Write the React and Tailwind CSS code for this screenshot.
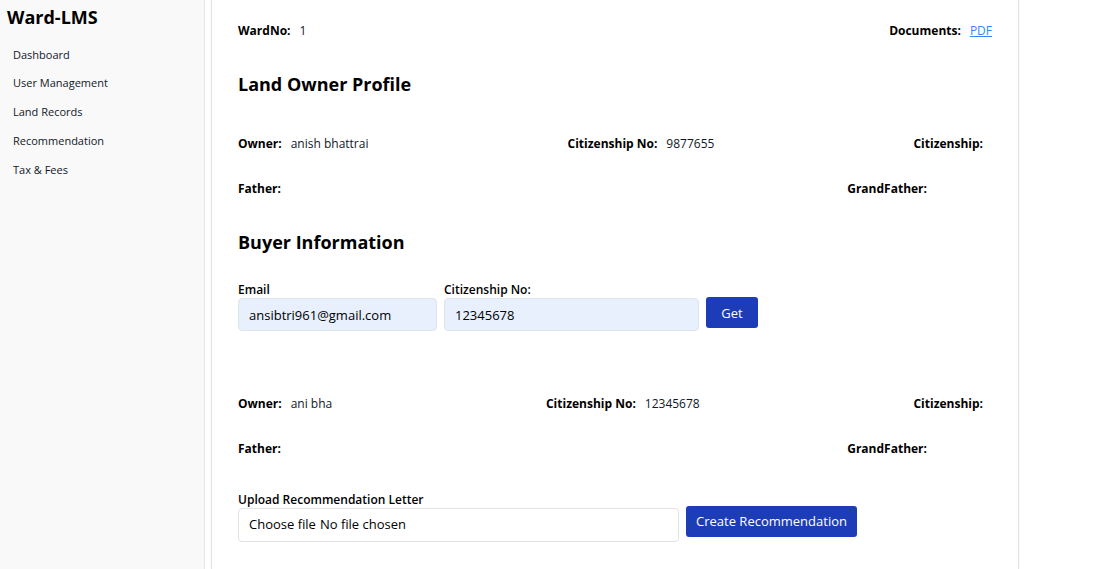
import React from "react";

const font = { fontFamily: '"Open Sans", "Noto Sans", sans-serif' };

function Field({ label, value, className = "" }) {
  return (
    <div className={"flex items-center text-[12px] leading-[16px] " + className}>
      <span className="font-bold text-black mr-[9px]">{label}</span>
      <span className="text-gray-900">{value}</span>
    </div>
  );
}

function Sidebar() {
  const items = ["Dashboard", "User Management", "Land Records", "Recommendation", "Tax & Fees"];
  return (
    <aside className="w-[205px] shrink-0 h-full bg-[#f9f9f9] border-r border-[#e6e6e6]">
      <div className="pl-[7px] pt-[5px] text-[18px] leading-[24px] font-bold text-black">Ward-LMS</div>
      <nav className="mt-[17.5px] pl-[13px] flex flex-col gap-[12.8px]">
        {items.map((it) => (
          <div key={it} className="text-[11px] leading-[16px] text-gray-900">{it}</div>
        ))}
      </nav>
    </aside>
  );
}

export default function App() {
  return (
    <div style={font} className="flex w-full h-[569px] overflow-hidden bg-white">
      <Sidebar />
      <main className="flex-1 pl-[6px]">
        <div className="w-[808px] h-full border-x border-[#e3e3e3] shadow-[0_0_2px_rgba(0,0,0,0.06)] px-[26px] pt-[23px]">
          <div className="flex justify-between">
            <Field label="WardNo:" value="1" />
            <div className="flex items-center text-[12px] leading-[16px]">
              <span className="font-bold text-black mr-[9px]">Documents:</span>
              <a href="#" className="text-[#3b82f6] underline">PDF</a>
            </div>
          </div>

          <h2 className="mt-[33px] text-[18px] leading-[24px] font-bold text-black">Land Owner Profile</h2>

          <div className="mt-[40px] flex justify-between">
            <Field label="Owner:" value="anish bhattrai" />
            <Field label="Citizenship No:" value="9877655" />
            <Field label="Citizenship:" value="" />
          </div>
          <div className="mt-[29px] flex justify-between pr-[56px]">
            <Field label="Father:" value="" />
            <Field label="GrandFather:" value="" />
          </div>

          <h2 className="mt-[33px] text-[18px] leading-[24px] font-bold text-black">Buyer Information</h2>

          <div className="mt-[28px] flex items-end gap-[7px]">
            <div className="flex flex-col w-[199px]">
              <label className="text-[12px] leading-[16px] font-semibold text-black">Email</label>
              <input
                readOnly
                value="ansibtri961@gmail.com"
                className="h-[33px] px-[10px] rounded-[4px] border border-[#dfe3ea] bg-[#e8f0fe] text-[13px] text-black outline-none"
              />
            </div>
            <div className="flex flex-col w-[255px]">
              <label className="text-[12px] leading-[16px] font-semibold text-black">Citizenship No:</label>
              <input
                readOnly
                value="12345678"
                className="h-[33px] px-[10px] rounded-[4px] border border-[#dfe3ea] bg-[#e8f0fe] text-[13px] text-black outline-none"
              />
            </div>
            <button className="mb-[3px] h-[31px] w-[52px] pt-[2px] rounded-[3px] bg-[#1c3db7] text-white text-[13px]">Get</button>
          </div>

          <div className="mt-[65px] flex justify-between">
            <Field label="Owner:" value="ani bha" />
            <Field label="Citizenship No:" value="12345678" />
            <Field label="Citizenship:" value="" />
          </div>
          <div className="mt-[29px] flex justify-between pr-[56px]">
            <Field label="Father:" value="" />
            <Field label="GrandFather:" value="" />
          </div>

          <div className="mt-[35px] flex items-end gap-[7px]">
            <div className="flex flex-col w-[441px]">
              <label className="text-[12px] leading-[16px] font-semibold text-black">Upload Recommendation Letter</label>
              <div className="h-[34px] px-[10px] flex items-center rounded-[4px] border border-[#e2e2e2] bg-white text-[13px] text-black">
                <span>Choose file</span>
                <span className="ml-[4px]">No file chosen</span>
              </div>
            </div>
            <button className="mb-[5px] h-[31px] w-[171px] rounded-[3px] bg-[#1c3db7] text-white text-[13px]">Create Recommendation</button>
          </div>
        </div>
      </main>
    </div>
  );
}
